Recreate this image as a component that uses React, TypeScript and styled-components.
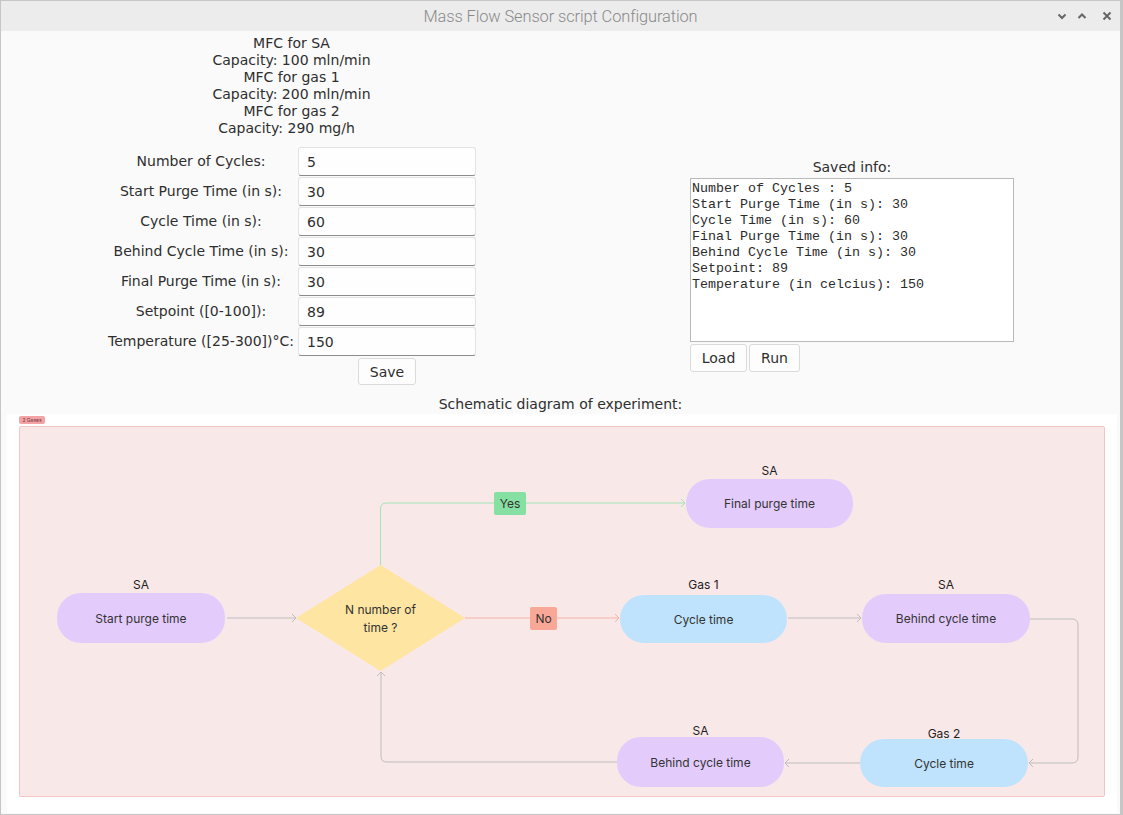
import React from "react";
import styled, { createGlobalStyle } from "styled-components";

const GlobalStyle = createGlobalStyle`
  html, body { margin: 0; padding: 0; background: #fafafa; }
  * { box-sizing: border-box; }
`;

const Window = styled.div`
  width: 1123px;
  height: 815px;
  border: 1px solid #c6c6c6;
  border-right-width: 3px;
  display: flex;
  flex-direction: column;
  background: #fafafa;
  overflow: hidden;
  font-family: "DejaVu Sans", sans-serif;
  font-size: 14px;
  color: #2e2e2e;
`;

const TitleBar = styled.div`
  height: 30px;
  flex: none;
  background: #ececec;
  display: flex;
  align-items: center;
  justify-content: center;
  position: relative;
  font-family: Roboto, sans-serif;
  font-weight: 300;
  font-size: 16.4px;
  color: #8a8a8a;
  letter-spacing: -0.1px;
`;

const TitleControls = styled.div`
  position: absolute;
  right: 7px;
  top: 0;
  height: 30px;
  display: flex;
  align-items: center;
`;

const Ctl = styled.span<{ $gap: number }>`
  display: flex;
  margin-left: ${(p) => p.$gap}px;
`;

const Content = styled.div`
  flex: 1;
  display: flex;
  flex-direction: column;
`;

const TopRow = styled.div`
  display: flex;
  align-items: flex-start;
`;

const LeftPanel = styled.div`
  margin-left: 105px;
  margin-top: 4px;
  width: 371px;
  display: flex;
  flex-direction: column;
`;

const Info = styled.div`
  text-align: center;
  line-height: 17px;
`;

const Trail = styled.span`
  padding-right: 10px;
`;

const Form = styled.div`
  margin-top: 10px;
  display: grid;
  grid-template-columns: 190px 178px;
  column-gap: 2px;
  row-gap: 1px;
  align-items: center;
`;

const Label = styled.label`
  text-align: center;
  white-space: nowrap;
  line-height: 17px;
`;

const Field = styled.input`
  width: 178px;
  height: 29px;
  border: 1px solid #e3e3e3;
  border-bottom-color: #8c8c8c;
  border-radius: 3px;
  background: #fefefe;
  padding: 0 8px;
  font-family: "DejaVu Sans", sans-serif;
  font-size: 14px;
  color: #2e2e2e;
  outline: none;
`;

const Button = styled.button<{ $w: number; $h?: number }>`
  width: ${(p) => p.$w}px;
  height: ${(p) => p.$h ?? 28}px;
  border: 1px solid #dadada;
  border-radius: 3px;
  background: #fdfdfd;
  font-family: "DejaVu Sans", sans-serif;
  font-size: 14px;
  color: #2e2e2e;
  padding: 0;
`;

const SaveCell = styled.div`
  grid-column: 2;
  display: flex;
  justify-content: center;
  margin-top: 1px;
`;

const RightPanel = styled.div`
  margin-left: 213px;
  margin-top: 128px;
  width: 324px;
  display: flex;
  flex-direction: column;
`;

const PanelTitle = styled.div`
  text-align: center;
  line-height: 17px;
  margin-bottom: 2px;
`;

const Saved = styled.textarea`
  width: 324px;
  height: 164px;
  border: 1px solid #b9b9b9;
  background: #fff;
  resize: none;
  overflow: hidden;
  padding: 2px 1px 0;
  font-family: "Liberation Mono", monospace;
  font-size: 13.33px;
  line-height: 16px;
  color: #2b2b2b;
  outline: none;
`;

const ButtonRow = styled.div`
  display: flex;
  gap: 2px;
  margin-top: 2px;
`;

const Caption = styled.div`
  margin-top: 11px;
  text-align: center;
  line-height: 17px;
`;

const Diagram = styled.div`
  position: relative;
  margin: 1px 0 0 6px;
  width: 1110px;
  height: 399px;
  background: #fff;
  font-family: Inter, sans-serif;
  font-size: 12px;
  color: #2f2f2f;
`;

const Tag = styled.div`
  position: absolute;
  left: 12px;
  top: 2px;
  width: 26px;
  height: 8px;
  border-radius: 2px;
  background: #f3a3a3;
  font-size: 5px;
  line-height: 8px;
  text-align: center;
  color: #6a3a3a;
`;

const Frame = styled.div`
  position: absolute;
  left: 12px;
  top: 12px;
  width: 1086px;
  height: 371px;
  background: #f9e8e8;
  border: 1px solid #f3c6c6;
  border-radius: 2px;
`;

const Edges = styled.svg`
  position: absolute;
  left: 0;
  top: 0;
`;

const Node = styled.div<{ $kind: "sa" | "gas" }>`
  position: absolute;
  display: flex;
  align-items: center;
  justify-content: center;
  border-radius: 24px;
  background: ${(p) => (p.$kind === "sa" ? "#e3ccfc" : "#bfe3fc")};
  color: #333;
`;

const NodeTitle = styled.div`
  position: absolute;
  transform: translate(-50%, -50%);
  color: #1d1d1d;
  white-space: nowrap;
`;

const Diamond = styled.div`
  position: absolute;
  left: 289px;
  top: 151px;
  width: 169px;
  height: 106px;
  clip-path: polygon(50% 0, 100% 50%, 50% 100%, 0 50%);
  background: #fee5a1;
  display: flex;
  align-items: center;
  justify-content: center;
  text-align: center;
  line-height: 18px;
  padding-top: 2px;
  color: #333;
`;

const Badge = styled.div<{ $bg: string }>`
  position: absolute;
  height: 23px;
  display: flex;
  align-items: center;
  justify-content: center;
  border-radius: 2px;
  background: ${(p) => p.$bg};
  color: #333;
`;

type Box = {
  x: number;
  y: number;
  w: number;
  h: number;
  ty: number;
  kind: "sa" | "gas";
  text: string;
  title: string;
};

const nodes: Box[] = [
  { x: 50, y: 179, w: 168, h: 50, ty: 170, kind: "sa", text: "Start purge time", title: "SA" },
  { x: 679, y: 65, w: 167, h: 49, ty: 56, kind: "sa", text: "Final purge time", title: "SA" },
  { x: 613, y: 181, w: 167, h: 48, ty: 170, kind: "gas", text: "Cycle time", title: "Gas 1" },
  { x: 855, y: 180, w: 168, h: 49, ty: 170, kind: "sa", text: "Behind cycle time", title: "SA" },
  { x: 853, y: 325, w: 168, h: 48, ty: 319, kind: "gas", text: "Cycle time", title: "Gas 2" },
  { x: 610, y: 323, w: 167, h: 50, ty: 316, kind: "sa", text: "Behind cycle time", title: "SA" },
];

const gray = "#bdbdbd";

function Head({ x, y, dir, color }: { x: number; y: number; dir: "r" | "l" | "u"; color: string }) {
  const d =
    dir === "r"
      ? `M${x - 4} ${y - 4} L${x} ${y} L${x - 4} ${y + 4}`
      : dir === "l"
      ? `M${x + 4} ${y - 4} L${x} ${y} L${x + 4} ${y + 4}`
      : `M${x - 4} ${y + 4} L${x} ${y} L${x + 4} ${y + 4}`;
  return <path d={d} fill="none" stroke={color} strokeWidth={1} />;
}

function Flow() {
  return (
    <Edges width={1110} height={399}>
      <g fill="none" strokeWidth={1}>
        <path d="M220 204 H289" stroke={gray} />
        <path d="M373.5 151 V95 Q373.5 89 379.5 89 H678" stroke="#a3e3b5" />
        <path d="M458 204 H612" stroke="#f7b3a7" />
        <path d="M781 204 H854" stroke={gray} />
        <path d="M1023 205 H1065 Q1071 205 1071 211 V343 Q1071 349 1065 349 H1022" stroke={gray} />
        <path d="M853 349 H778" stroke={gray} />
        <path d="M610 348 H379.5 Q374 348 374 342 V258" stroke={gray} />
      </g>
      <Head x={289} y={204} dir="r" color={gray} />
      <Head x={678} y={89} dir="r" color="#a3e3b5" />
      <Head x={612} y={204} dir="r" color="#f7b3a7" />
      <Head x={854} y={204} dir="r" color={gray} />
      <Head x={1022} y={349} dir="l" color={gray} />
      <Head x={778} y={349} dir="l" color={gray} />
      <Head x={374} y={258} dir="u" color={gray} />
    </Edges>
  );
}

function Chevron({ up }: { up?: boolean }) {
  return (
    <svg width={12} height={12} viewBox="0 0 12 12">
      <path
        d={up ? "M2.5 8 L6 4.5 L9.5 8" : "M2.5 4.5 L6 8 L9.5 4.5"}
        fill="none"
        stroke="#666"
        strokeWidth={2}
      />
    </svg>
  );
}

function CloseIcon() {
  return (
    <svg width={12} height={12} viewBox="0 0 12 12">
      <path d="M2.5 2.5 L9.5 9.5 M9.5 2.5 L2.5 9.5" fill="none" stroke="#666" strokeWidth={2} />
    </svg>
  );
}

const fields: [string, string][] = [
  ["Number of Cycles:", "5"],
  ["Start Purge Time (in s):", "30"],
  ["Cycle Time (in s):", "60"],
  ["Behind Cycle Time (in s):", "30"],
  ["Final Purge Time (in s):", "30"],
  ["Setpoint ([0-100]):", "89"],
  ["Temperature ([25-300])°C:", "150"],
];

const savedText = [
  "Number of Cycles : 5",
  "Start Purge Time (in s): 30",
  "Cycle Time (in s): 60",
  "Final Purge Time (in s): 30",
  "Behind Cycle Time (in s): 30",
  "Setpoint: 89",
  "Temperature (in celcius): 150",
].join("\n");

export default function App() {
  return (
    <>
      <GlobalStyle />
      <Window>
        <TitleBar>
          Mass Flow Sensor script Configuration
          <TitleControls>
            <Ctl $gap={0}>
              <Chevron />
            </Ctl>
            <Ctl $gap={8}>
              <Chevron up />
            </Ctl>
            <Ctl $gap={13}>
              <CloseIcon />
            </Ctl>
          </TitleControls>
        </TitleBar>
        <Content>
          <TopRow>
            <LeftPanel>
              <Info>
                MFC for SA
                <br />
                Capacity: 100 mln/min
                <br />
                MFC for gas 1
                <br />
                Capacity: 200 mln/min
                <br />
                MFC for gas 2
                <br />
                <Trail>Capacity: 290 mg/h</Trail>
              </Info>
              <Form>
                {fields.map(([label, value]) => (
                  <React.Fragment key={label}>
                    <Label>{label}</Label>
                    <Field readOnly value={value} />
                  </React.Fragment>
                ))}
                <SaveCell>
                  <Button $w={58} $h={27}>
                    Save
                  </Button>
                </SaveCell>
              </Form>
            </LeftPanel>
            <RightPanel>
              <PanelTitle>Saved info:</PanelTitle>
              <Saved readOnly value={savedText} />
              <ButtonRow>
                <Button $w={57}>Load</Button>
                <Button $w={51}>Run</Button>
              </ButtonRow>
            </RightPanel>
          </TopRow>
          <Caption>Schematic diagram of experiment:</Caption>
          <Diagram>
            <Tag>2 Gases</Tag>
            <Frame />
            <Flow />
            <Diamond>
              N number of
              <br />
              time ?
            </Diamond>
            <Badge $bg="#86e0a2" style={{ left: 487, top: 78, width: 32 }}>
              Yes
            </Badge>
            <Badge $bg="#f9a897" style={{ left: 523, top: 193, width: 27 }}>
              No
            </Badge>
            {nodes.map((n, i) => (
              <React.Fragment key={i}>
                <NodeTitle style={{ left: n.x + n.w / 2, top: n.ty }}>{n.title}</NodeTitle>
                <Node $kind={n.kind} style={{ left: n.x, top: n.y, width: n.w, height: n.h }}>
                  {n.text}
                </Node>
              </React.Fragment>
            ))}
          </Diagram>
        </Content>
      </Window>
    </>
  );
}
